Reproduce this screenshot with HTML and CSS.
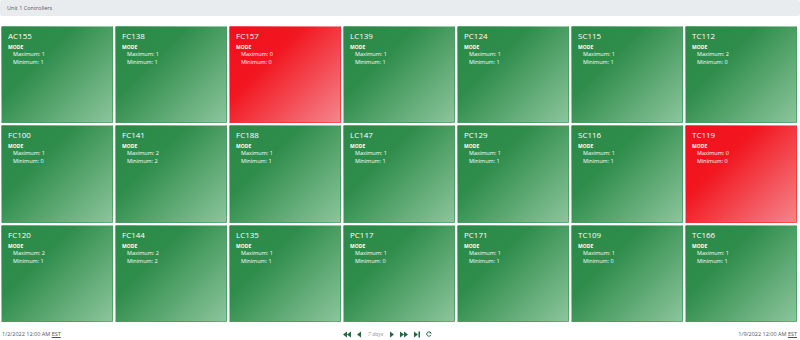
FILE: index.html
```html
<!DOCTYPE html>
<html>
  <head>
    <title>Unit 1 Controllers</title>
    <link rel="stylesheet" href="styles.css">
  </head>
  <body>
    <div class="title-bar">Unit 1 Controllers</div>
    <div class="tiles">
      <div class="tile ok"><div class="name">AC155</div><div class="mode">MODE</div><div class="val">Maximum: 1</div><div class="val">Minimum: 1</div></div>
      <div class="tile ok"><div class="name">FC138</div><div class="mode">MODE</div><div class="val">Maximum: 1</div><div class="val">Minimum: 1</div></div>
      <div class="tile alarm"><div class="name">FC157</div><div class="mode">MODE</div><div class="val">Maximum: 0</div><div class="val">Minimum: 0</div></div>
      <div class="tile ok"><div class="name">LC139</div><div class="mode">MODE</div><div class="val">Maximum: 1</div><div class="val">Minimum: 1</div></div>
      <div class="tile ok"><div class="name">PC124</div><div class="mode">MODE</div><div class="val">Maximum: 1</div><div class="val">Minimum: 1</div></div>
      <div class="tile ok"><div class="name">SC115</div><div class="mode">MODE</div><div class="val">Maximum: 1</div><div class="val">Minimum: 1</div></div>
      <div class="tile ok"><div class="name">TC112</div><div class="mode">MODE</div><div class="val">Maximum: 2</div><div class="val">Minimum: 0</div></div>

      <div class="tile ok"><div class="name">FC100</div><div class="mode">MODE</div><div class="val">Maximum: 1</div><div class="val">Minimum: 0</div></div>
      <div class="tile ok"><div class="name">FC141</div><div class="mode">MODE</div><div class="val">Maximum: 2</div><div class="val">Minimum: 2</div></div>
      <div class="tile ok"><div class="name">FC188</div><div class="mode">MODE</div><div class="val">Maximum: 1</div><div class="val">Minimum: 1</div></div>
      <div class="tile ok"><div class="name">LC147</div><div class="mode">MODE</div><div class="val">Maximum: 1</div><div class="val">Minimum: 1</div></div>
      <div class="tile ok"><div class="name">PC129</div><div class="mode">MODE</div><div class="val">Maximum: 1</div><div class="val">Minimum: 1</div></div>
      <div class="tile ok"><div class="name">SC116</div><div class="mode">MODE</div><div class="val">Maximum: 1</div><div class="val">Minimum: 1</div></div>
      <div class="tile alarm"><div class="name">TC119</div><div class="mode">MODE</div><div class="val">Maximum: 0</div><div class="val">Minimum: 0</div></div>

      <div class="tile ok"><div class="name">FC120</div><div class="mode">MODE</div><div class="val">Maximum: 2</div><div class="val">Minimum: 1</div></div>
      <div class="tile ok"><div class="name">FC144</div><div class="mode">MODE</div><div class="val">Maximum: 2</div><div class="val">Minimum: 2</div></div>
      <div class="tile ok"><div class="name">LC135</div><div class="mode">MODE</div><div class="val">Maximum: 1</div><div class="val">Minimum: 1</div></div>
      <div class="tile ok"><div class="name">PC117</div><div class="mode">MODE</div><div class="val">Maximum: 1</div><div class="val">Minimum: 0</div></div>
      <div class="tile ok"><div class="name">PC171</div><div class="mode">MODE</div><div class="val">Maximum: 1</div><div class="val">Minimum: 1</div></div>
      <div class="tile ok"><div class="name">TC109</div><div class="mode">MODE</div><div class="val">Maximum: 1</div><div class="val">Minimum: 0</div></div>
      <div class="tile ok"><div class="name">TC166</div><div class="mode">MODE</div><div class="val">Maximum: 1</div><div class="val">Minimum: 1</div></div>
    </div>
    <div class="footer">
      <div class="stamp">1/2/2022 12:00 AM <u>EST</u></div>
      <div class="nav">
        <svg width="8" height="7" viewBox="0 0 8 6"><path d="M4 0 L0 3 L4 6 Z M8 0 L4 3 L8 6 Z"/></svg>
        <svg width="4" height="7" viewBox="0 0 4 6"><path d="M4 0 L0 3 L4 6 Z"/></svg>
        <span class="range">7 days</span>
        <svg width="4" height="7" viewBox="0 0 4 6"><path d="M0 0 L4 3 L0 6 Z"/></svg>
        <svg width="8" height="7" viewBox="0 0 8 6"><path d="M0 0 L4 3 L0 6 Z M4 0 L8 3 L4 6 Z"/></svg>
        <svg width="6" height="7" viewBox="0 0 6 6"><path d="M0 0 L4 3 L0 6 Z M4.5 0 H6 V6 H4.5 Z"/></svg>
        <svg width="6" height="6" viewBox="0 0 6 6"><path d="M5 2.2 A2.2 2.2 0 1 0 5 3.8" fill="none" stroke="currentColor" stroke-width="1"/><path d="M3.8 0.6 L5.6 2.4 L3.6 2.6 Z"/></svg>
      </div>
      <div class="stamp">1/9/2022 12:00 AM <u>EST</u></div>
    </div>
  </body>
</html>
```

FILE: styles.css
```css
body {
  margin:0;
  font-family:"Open Sans", "Noto Sans", sans-serif;
  background:#fff;
}
.title-bar {
  height:16px;
  line-height:16px;
  background:#e9ecef;
  border-radius:2px;
  padding-left:7px;
  font-size:5.5px;
  color:#555;
}
.tiles {
  display:grid;
  grid-template-columns:repeat(7, 1fr);
  grid-template-rows:97px 98px 97px;
  gap:2px;
  margin:10px 3px 0 1px;
}
.tile {
  padding:3px 6px;
  color:#fff;
  border:1px solid rgba(255,255,255,0.15);
  border-radius:1px;
}
.tile.ok {
  background:linear-gradient(135deg, #2b8a47 0%, #2f8d4b 35%, #8cc59c 100%);
}
.tile.alarm {
  background:linear-gradient(135deg, #f0101e 0%, #f2161f 35%, #f5858c 100%);
}
.name {
  font-size:8px;
  line-height:11px;
  margin-bottom:3px;
}
.mode {
  font-size:5px;
  font-weight:bold;
  line-height:7px;
}
.val {
  font-size:5.5px;
  line-height:7.5px;
  padding-left:5px;
}
.footer {
  display:flex;
  justify-content:space-between;
  align-items:center;
  height:24px;
  padding:0 3px 0 2px;
  font-size:5.5px;
  color:#555;
}
.nav {
  display:flex;
  align-items:center;
  gap:6px;
  color:#1e6b44;
  margin-right:24px;
}
.nav svg {
  fill:currentColor;
}
.range {
  color:#999;
  font-style:italic;
  font-size:5.5px;
  margin:0 1px;
}
```
